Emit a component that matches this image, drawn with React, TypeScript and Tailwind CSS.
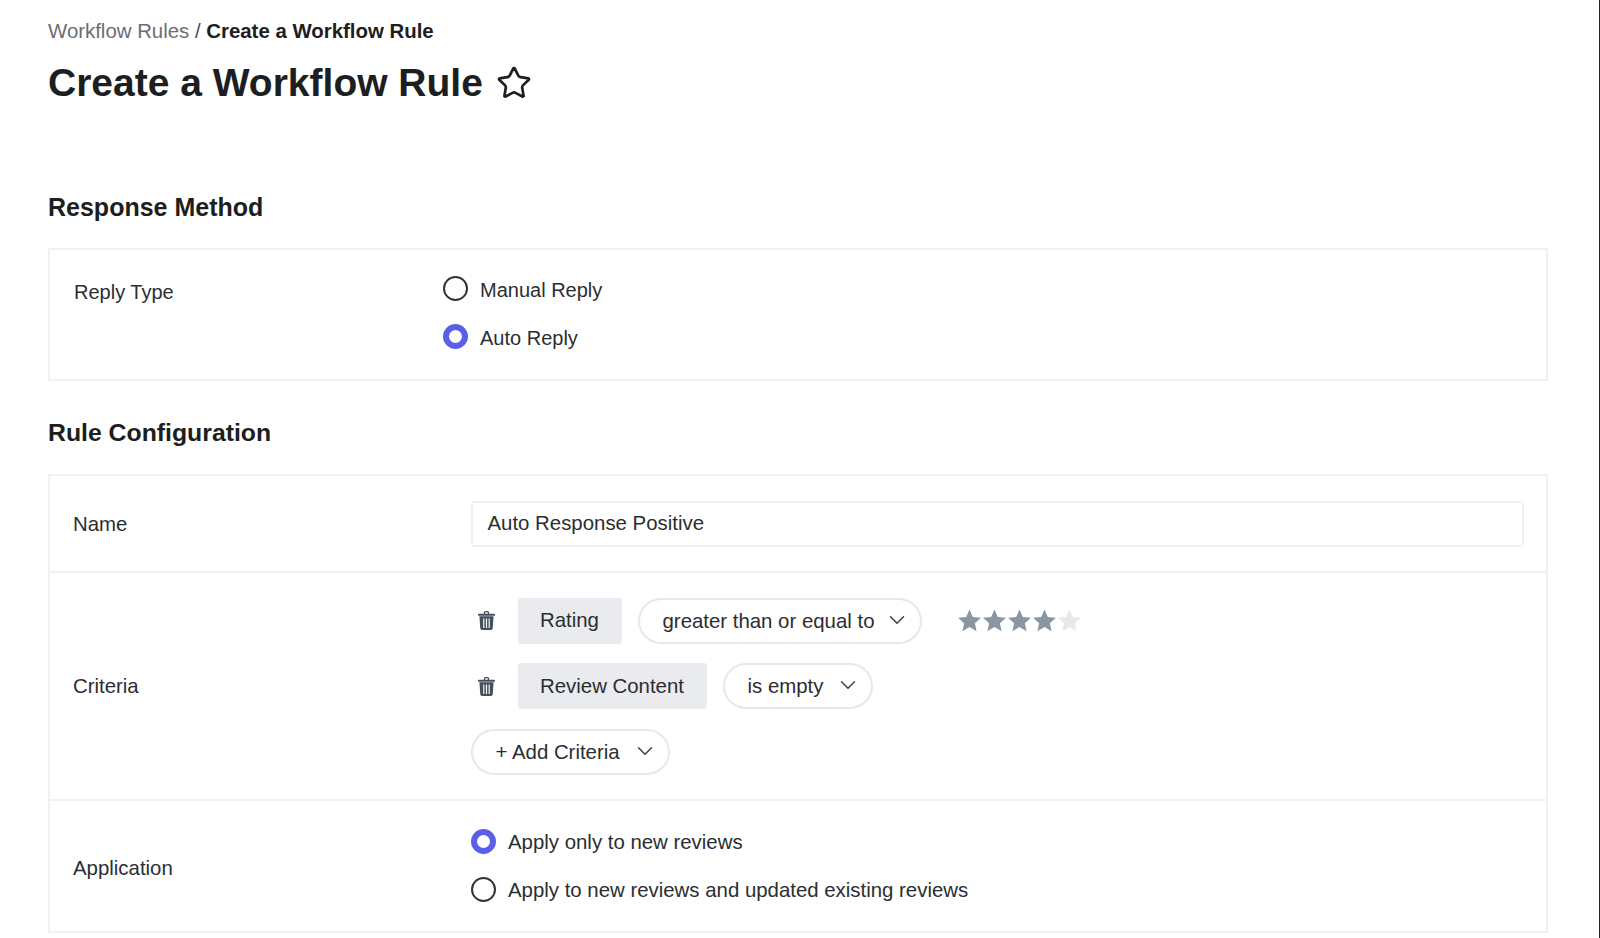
import { ChevronDown, Star } from "lucide-react";

const TrashIcon = () => (
  <svg viewBox="0 0 16 18" className="w-[17px] h-[19px] text-[#44505c]" fill="currentColor">
    <path d="M5.500 1.500C5.500.7 6.200 0 7 0h2c.8 0 1.500.7 1.500 1.500V2.500H15c.6 0 1 .4 1 1v1H0v-1c0-.6.4-1 1-1h4.500V1.500zM6.800 1.300v1.200h2.400V1.300H6.800z" />
    <path d="M1.300 5h13.400l-.8 11.400c-.1.900-.8 1.600-1.700 1.600H3.800c-.9 0-1.600-.7-1.700-1.600L1.300 5zm3.600 2v9h1.100V7H4.900zm2.550 0v9h1.100V7h-1.100zm2.550 0v9h1.100V7h-1.100z" fillRule="evenodd" />
  </svg>
);

const Radio = ({ checked, label, size }: { checked?: boolean; label: string; size: string }) => (
  <div className="flex items-center gap-[12.5px] h-[25px]">
    {checked ? (
      <span className="w-[25px] h-[25px] -mt-[2px] rounded-full border-[6px] border-[#5b5fe8] bg-white" />
    ) : (
      <span className="w-[25px] h-[25px] -mt-[2px] rounded-full border-2 border-[#2f3336] bg-white" />
    )}
    <span className={`${size} text-[#2b2e31]`}>{label}</span>
  </div>
);

const Pill = ({ label, width }: { label: string; width: string }) => (
  <div className={`h-[46px] ${width} rounded-full border-2 border-[#e6e8eb] bg-white flex items-center justify-between pl-[23px] pr-[10px]`}>
    <span className="text-[20.4px] text-[#2b2e31] pt-[1px]">{label}</span>
    <ChevronDown className="w-[26px] h-[26px] text-[#3c4650] -mt-[2px]" strokeWidth={1.4} />
  </div>
);

const Chip = ({ label, width }: { label: string; width: string }) => (
  <div className={`h-[46px] ${width} rounded-[3px] bg-[#e9ebef] flex items-center justify-center text-[20.4px] text-[#2b2e31]`}>
    {label}
  </div>
);

export default function App() {
  const stars = [1, 2, 3, 4, 5];

  return (
    <div className="w-[1600px] h-[938px] overflow-hidden bg-white pl-[48px] pr-[51px] border-r border-[#222222] font-['Liberation_Sans',Arial,sans-serif] text-[#1c1e20]">
      {/* Header */}
      <div className="pt-[17px] text-[20.4px] leading-[28px]">
        <span className="text-[#6b6e72]">Workflow Rules</span>
        <span className="text-[#4a4d50]"> / </span>
        <span className="font-bold">Create a Workflow Rule</span>
      </div>
      <div className="flex items-center gap-[13px] mt-[14px] h-[48px]">
        <h1 className="text-[39px] font-bold leading-[48px]">Create a Workflow Rule</h1>
        <Star className="w-[36px] h-[36px] text-[#1c1e20]" strokeWidth={1.8} />
      </div>

      {/* Response Method */}
      <h2 className="mt-[84px] text-[25px] font-bold leading-[32px]">Response Method</h2>
      <div className="mt-[25px] h-[133px] border-2 border-[#f0f1f4] flex">
        <div className="w-[392.5px] pl-[24px] pt-[28px] text-[20px] leading-[28px] text-[#2b2e31]">Reply Type</div>
        <div className="flex flex-col gap-[23px] pt-[27px]">
          <Radio label="Manual Reply" size="text-[20px]" />
          <Radio checked label="Auto Reply" size="text-[20px]" />
        </div>
      </div>

      {/* Rule Configuration */}
      <h2 className="mt-[36px] text-[24.8px] font-bold leading-[32px]">Rule Configuration</h2>
      <div className="mt-[25px] h-[459px] border-2 border-[#f0f1f4] flex flex-col">
        <div className="h-[97px] flex items-center border-b-2 border-[#f0f1f4] pr-[22px]">
          <div className="w-[420.5px] pl-[23px] pt-[1px] text-[20.4px] text-[#2b2e31]">Name</div>
          <div className="flex-1 h-[46px] border-2 border-[#eef0f3] rounded-[3px] pl-[15px] flex items-center text-[20.4px] text-[#2b2e31]">
            Auto Response Positive
          </div>
        </div>

        <div className="h-[228px] flex items-center border-b-2 border-[#f0f1f4]">
          <div className="w-[420.5px] pl-[23px] pt-[1px] text-[20.4px] text-[#2b2e31]">Criteria</div>
          <div className="flex flex-col gap-[19.5px]">
            <div className="flex items-center">
              <div className="w-[47px] pl-[7px]"><TrashIcon /></div>
              <Chip label="Rating" width="w-[104px]" />
              <div className="w-[16px]" />
              <Pill label="greater than or equal to" width="w-[284px]" />
              <div className="flex ml-[35px]">
                {stars.map((s) => (
                  <svg key={s} viewBox="0 0 24 24" className="w-[25px] h-[25px]" fill={s < 5 ? "#8a96a3" : "#e6e8ea"}>
                    <path d="M12 1.500l3.200 7.100 7.800.8-5.800 5.200 1.600 7.600L12 18.300l-6.800 3.900 1.600-7.600L1 9.400l7.800-.8z" />
                  </svg>
                ))}
              </div>
            </div>
            <div className="flex items-center">
              <div className="w-[47px] pl-[7px]"><TrashIcon /></div>
              <Chip label="Review Content" width="w-[189px]" />
              <div className="w-[16px]" />
              <Pill label="is empty" width="w-[150px]" />
            </div>
            <Pill label="+ Add Criteria" width="w-[199px]" />
          </div>
        </div>

        <div className="flex-1 flex items-center">
          <div className="w-[420.5px] pl-[23px] pt-[4px] text-[20.4px] text-[#2b2e31]">Application</div>
          <div className="flex flex-col gap-[23px]">
            <Radio checked label="Apply only to new reviews" size="text-[20.4px]" />
            <Radio label="Apply to new reviews and updated existing reviews" size="text-[20.4px]" />
          </div>
        </div>
      </div>
    </div>
  );
}
